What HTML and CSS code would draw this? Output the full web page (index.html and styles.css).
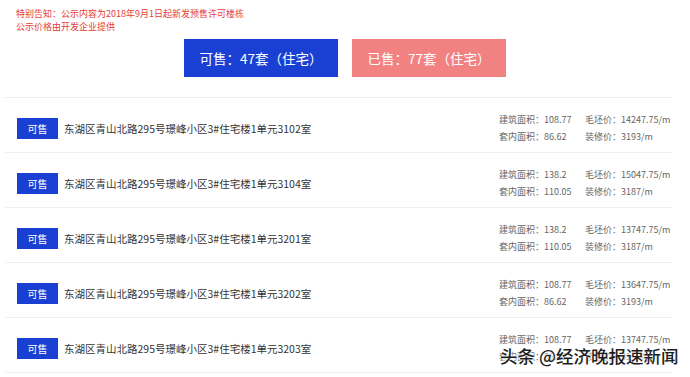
FILE: index.html
```html
<!DOCTYPE html>
<html lang="zh">
<head>
<meta charset="utf-8">
<link rel="stylesheet" href="styles.css">
</head>
<body>
<div class="page">
  <div class="notice">
    <div>特别告知：公示内容为2018年9月1日起新发预售许可楼栋</div>
    <div>公示价格由开发企业提供</div>
  </div>
  <div class="summary">
    <div class="sum sum-avail">可售：47套（住宅）</div>
    <div class="sum sum-sold">已售：77套（住宅）</div>
  </div>
  <div class="list">
    <div class="row">
      <span class="badge">可售</span>
      <span class="addr">东湖区青山北路295号璟峰小区3#住宅楼1单元3102室</span>
      <div class="info">
        <span>建筑面积：108.77</span><span>毛坯价：14247.75/m</span>
        <span>套内面积：86.62</span><span>装修价：3193/m</span>
      </div>
    </div>
    <div class="row">
      <span class="badge">可售</span>
      <span class="addr">东湖区青山北路295号璟峰小区3#住宅楼1单元3104室</span>
      <div class="info">
        <span>建筑面积：138.2</span><span>毛坯价：15047.75/m</span>
        <span>套内面积：110.05</span><span>装修价：3187/m</span>
      </div>
    </div>
    <div class="row">
      <span class="badge">可售</span>
      <span class="addr">东湖区青山北路295号璟峰小区3#住宅楼1单元3201室</span>
      <div class="info">
        <span>建筑面积：138.2</span><span>毛坯价：13747.75/m</span>
        <span>套内面积：110.05</span><span>装修价：3187/m</span>
      </div>
    </div>
    <div class="row">
      <span class="badge">可售</span>
      <span class="addr">东湖区青山北路295号璟峰小区3#住宅楼1单元3202室</span>
      <div class="info">
        <span>建筑面积：108.77</span><span>毛坯价：13647.75/m</span>
        <span>套内面积：86.62</span><span>装修价：3193/m</span>
      </div>
    </div>
    <div class="row">
      <span class="badge">可售</span>
      <span class="addr">东湖区青山北路295号璟峰小区3#住宅楼1单元3203室</span>
      <div class="info">
        <span>建筑面积：108.77</span><span>毛坯价：13747.75/m</span>
        <span>套内面积：86.62</span><span>装修价：3193/m</span>
      </div>
    </div>
  </div>
  <div class="watermark">头条 @经济晚报速新闻</div>
</div>
</body>
</html>
```
FILE: styles.css
```css
html, body {
  margin: 0;
  padding: 0;
  background: #ffffff;
}
body {
  font-family: "Noto Sans CJK SC", "Noto Sans", sans-serif;
  width: 690px;
  height: 377px;
  overflow: hidden;
}
.page {
  position: relative;
  height: 377px;
}
.notice {
  padding: 7px 0 0 16px;
  font-size: 9px;
  line-height: 13px;
  color: #e53d38;
}
.summary {
  display: flex;
  justify-content: center;
  gap: 14px;
  margin-top: 6px;
}
.sum {
  width: 154px;
  height: 38px;
  display: flex;
  align-items: center;
  justify-content: center;
  color: #ffffff;
  font-size: 13.5px;
}
.sum-avail {
  background: #1a3fd3;
}
.sum-sold {
  background: #f28282;
}
.list {
  margin: 20px 18px 0 5px;
  border-top: 1px solid #ececec;
}
.row {
  display: flex;
  align-items: center;
  height: 55px;
  box-sizing: border-box;
  padding: 6px 0 0 12px;
  border-bottom: 1px solid #f0f0f0;
}
.badge {
  width: 41px;
  height: 21px;
  background: #1a3fd3;
  color: #ffffff;
  font-size: 10px;
  display: flex;
  align-items: center;
  justify-content: center;
  flex: none;
}
.addr {
  margin-left: 6px;
  font-size: 10.5px;
  color: #333333;
  flex: 1;
}
.info {
  display: grid;
  grid-template-columns: 86px auto;
  font-size: 9px;
  line-height: 17px;
  color: #666666;
  width: 173px;
  flex: none;
}
.watermark {
  position: absolute;
  left: 500px;
  top: 344px;
  font-size: 17.5px;
  font-weight: 500;
  line-height: 24px;
  color: #1e1e1e;
  text-shadow: 0 0 2px #fff, 0 0 2px #fff, 0 0 3px #fff;
}
```
